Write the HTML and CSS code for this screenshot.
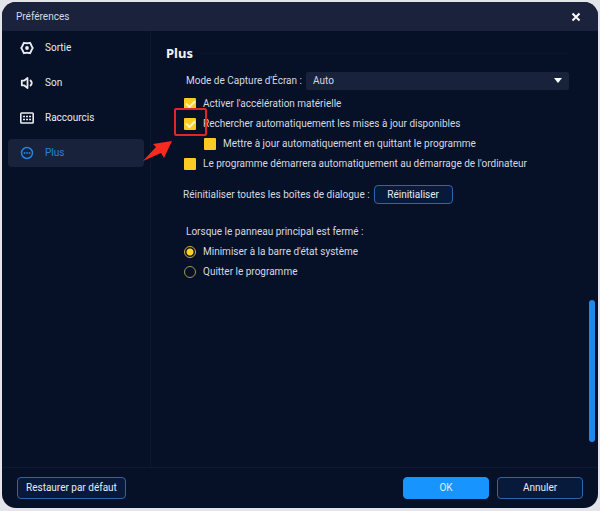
FILE: index.html
```html
<!DOCTYPE html>
<html lang="fr">
<head>
<meta charset="utf-8">
<meta name="viewport" content="width=device-width, initial-scale=1">
<title>Préférences</title>
<link rel="stylesheet" href="styles.css">
</head>
<body>
<div class="window">
  <header class="titlebar">
    <h1>Préférences</h1>
    <button class="close" type="button" aria-label="Fermer">
      <svg width="10" height="10" viewBox="0 0 10 10"><path d="M1.500 1.500l7 7M8.500 1.500l-7 7" fill="none" stroke="currentColor" stroke-width="2"/></svg>
    </button>
  </header>
  <div class="body">
    <nav class="sidebar">
      <a href="#sortie">
        <svg width="14" height="14" viewBox="0 0 14 14" fill="none" stroke="currentColor" stroke-width="1.900" stroke-linejoin="round"><path d="M4 1.800Q7 2.600 10 1.800L11.300 4.200Q11.700 5.500 12.800 7Q11.700 8.500 11.300 9.800L10 12.200Q7 11.400 4 12.200L2.700 9.800Q2.300 8.500 1.200 7Q2.300 5.500 2.700 4.200Z"/><circle cx="7" cy="7" r="1.900" fill="currentColor" stroke="none"/></svg>
        Sortie</a>
      <a href="#son">
        <svg width="14" height="14" viewBox="0 0 14 14" fill="none" stroke="currentColor" stroke-width="1.800" stroke-linejoin="round"><path d="M1.800 4.700H4L7.500 2V12L4 9.300H1.800ZM10 4Q13.600 7 10 10"/></svg>
        Son</a>
      <a href="#raccourcis">
        <svg width="14" height="14" viewBox="0 0 14 14" fill="none" stroke="currentColor"><rect x="0.800" y="2" width="12.400" height="10" rx="0.800" stroke-width="1.600"/><path d="M3 5.500h8" stroke-width="1.500" stroke-dasharray="2 1"/><path d="M3 8.500h8" stroke-width="1.500" stroke-dasharray="2 1"/></svg>
        Raccourcis</a>
      <a class="active" href="#plus" aria-current="page">
        <svg width="14" height="14" viewBox="0 0 14 14"><circle cx="7" cy="7" r="5.500" fill="none" stroke="currentColor" stroke-width="1.500"/><g fill="currentColor"><circle cx="4.500" cy="7" r="0.900"/><circle cx="7" cy="7" r="0.900"/><circle cx="9.500" cy="7" r="0.900"/></g></svg>
        Plus</a>
    </nav>
    <main class="content">
      <div class="heading"><h2>Plus</h2></div>
      <div class="field">
        <label for="mode">Mode de Capture d'Écran :</label>
        <div class="select">
          <select id="mode"><option>Auto</option></select>
          <svg width="8" height="5" viewBox="0 0 8 5"><path d="M0 0H8L4 5Z" fill="currentColor"/></svg>
        </div>
      </div>
      <div class="options">
        <label><input type="checkbox" checked>Activer l'accélération matérielle</label>
        <label class="marked"><input type="checkbox" checked>Rechercher automatiquement les mises à jour disponibles
          <svg class="callout" width="66" height="56" viewBox="0 0 66 56"><rect x="33" y="2" width="31" height="26" rx="1" fill="none" stroke="#e12629" stroke-width="2"/><path d="M1 54L14 40L11 37L30 34L22 51L19 46Z" fill="#f72a20"/></svg>
        </label>
        <label class="nested"><input type="checkbox">Mettre à jour automatiquement en quittant le programme</label>
        <label><input type="checkbox">Le programme démarrera automatiquement au démarrage de l'ordinateur</label>
      </div>
      <div class="reset">
        <span>Réinitialiser toutes les boîtes de dialogue :</span>
        <button class="button" type="button">Réinitialiser</button>
      </div>
      <fieldset>
        <legend>Lorsque le panneau principal est fermé :</legend>
        <div class="options">
          <label><input type="radio" name="fermeture" checked>Minimiser à la barre d'état système</label>
          <label><input type="radio" name="fermeture">Quitter le programme</label>
        </div>
      </fieldset>
      <div class="scrollbar"></div>
    </main>
  </div>
  <footer class="footer">
    <button class="button restore" type="button">Restaurer par défaut</button>
    <button class="button primary" type="button">OK</button>
    <button class="button" type="button">Annuler</button>
  </footer>
</div>
</body>
</html>
```
FILE: styles.css
```css
* { box-sizing: border-box; }
body {
  margin: 0;
  padding: 2px 2px 3px;
  height: 100vh;
  background: #e4e5ea;
  color: #d5d9e1;
  font: 10px/14px Roboto, sans-serif;
}
.window {
  height: 100%;
  display: flex;
  flex-direction: column;
  overflow: hidden;
  border-radius: 14px;
  background: #061027;
}
.titlebar {
  flex: none;
  height: 29px;
  padding: 0 14px;
  display: flex;
  align-items: center;
  justify-content: space-between;
  background: #1a233b;
}
h1 { margin: 0; font-size: 10px; font-weight: normal; }
.close {
  padding: 0;
  width: 16px;
  height: 16px;
  display: grid;
  place-items: center;
  border: 0;
  background: none;
  color: #fff;
}
.body { flex: 1; display: flex; min-height: 0; }
.sidebar {
  flex: none;
  width: 149px;
  padding: 3px 6px;
  display: flex;
  flex-direction: column;
  gap: 7px;
  border-right: 1px solid #0e182f;
}
.sidebar a {
  height: 28px;
  padding: 0 12px;
  display: flex;
  align-items: center;
  gap: 11px;
  border-radius: 4px;
  color: #e8ebf0;
  text-decoration: none;
}
.sidebar .active { background: #18223a; color: #2783dc; }
.content {
  flex: 1;
  position: relative;
  padding: 13px 29px 0 32px;
}
.heading {
  display: flex;
  align-items: center;
  gap: 8px;
  margin-left: -17px;
}
.heading::after { content: ""; flex: 1; height: 1px; background: #0c162d; }
h2 {
  margin: 0;
  font: bold 13px/18px "Noto Sans", sans-serif;
  color: #f1f2f5;
}
.field {
  display: flex;
  align-items: center;
  gap: 4px;
  margin-top: 10px;
  padding-left: 3px;
}
.select { flex: 1; position: relative; }
select {
  appearance: none;
  display: block;
  width: 100%;
  height: 18px;
  padding: 0 7px;
  border: 0;
  border-radius: 2px;
  background: #18223a;
  color: inherit;
  font: inherit;
}
.select svg { position: absolute; right: 7px; top: 6px; color: #fff; pointer-events: none; }
.options { display: flex; flex-direction: column; }
.field + .options { margin-top: 4px; }
.options label {
  height: 20px;
  display: flex;
  align-items: center;
  gap: 7px;
}
.options .nested { padding-left: 20px; }
input {
  appearance: none;
  flex: none;
  margin: 0 0 0 1px;
  width: 12px;
  height: 12px;
}
input[type="checkbox"] { display: grid; place-items: center; background: #fbca24; border-radius: 1px; }
input[type="checkbox"]:checked::before {
  content: "";
  width: 7px;
  height: 4px;
  margin-bottom: 3px;
  border: solid #fff4c5;
  border-width: 0 0 2px 2px;
  transform: rotate(-45deg);
}
input[type="radio"] { border: 1px solid #a19552; border-radius: 50%; }
input[type="radio"]:checked { background: radial-gradient(circle, #ffd329 3px, transparent 4px); border-color: #d1aa38; }
.marked { position: relative; }
.callout { position: absolute; left: -41px; top: -7px; pointer-events: none; }
.reset {
  display: flex;
  align-items: center;
  gap: 4px;
  margin-top: 11px;
}
.button {
  height: 22px;
  min-width: 86px;
  padding: 0 8px;
  border: 1px solid #2c67ac;
  border-radius: 4px;
  background: #071a3b;
  color: #e8ebf0;
  font: inherit;
}
.reset .button { height: 19px; min-width: 79px; }
fieldset { margin: 21px 0 0; padding: 0; border: 0; }
legend { padding: 0 0 3px 3px; }
.scrollbar {
  position: absolute;
  right: 3px;
  bottom: 25px;
  width: 6px;
  height: 142px;
  border-radius: 3px;
  background: #2088e8;
}
.footer {
  flex: none;
  height: 41px;
  padding: 0 15px;
  display: flex;
  align-items: center;
  gap: 8px;
  border-top: 1px solid #101b32;
}
.restore { margin-right: auto; }
.primary { background: #1894ff; border-color: #1894ff; }
```
